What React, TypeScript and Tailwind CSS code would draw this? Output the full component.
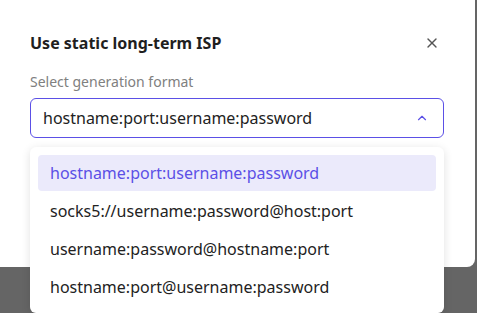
import { X, ChevronUp } from 'lucide-react'

const options = [
  'hostname:port:username:password',
  'socks5://username:password@host:port',
  'username:password@hostname:port',
  'hostname:port@username:password',
]

export default function App() {
  const selected = options[0]
  return (
    <div className="relative h-[313px] w-[477px] overflow-hidden bg-[#656565] font-['Noto_Sans',sans-serif]">
      <div className="-mt-[8px] -ml-[8px] h-[275px] w-[483px] rounded-lg bg-white pl-[38px] pr-[31px] pt-[39px]">
        <div className="flex items-center justify-between">
          <h2 className="text-[16px] font-bold text-[#1f1f1f]">Use static long-term ISP</h2>
          <X className="mr-[4px] h-[16px] w-[16px] text-[#555]" strokeWidth={2} />
        </div>
        <p className="mt-[16px] text-[14px] text-[#808080]">Select generation format</p>
        <div className="mt-[6px] flex h-[40px] items-center justify-between rounded-md border border-[#5b50e6] pl-[12px] pr-[14px]">
          <span className="text-[16px] text-[#222]">{selected}</span>
          <ChevronUp className="h-[14px] w-[14px] text-[#5b50e6]" strokeWidth={2} />
        </div>
      </div>

      <div className="absolute left-[30px] top-[147px] w-[414px] rounded-md bg-white p-[8px] shadow-[0_2px_10px_rgba(0,0,0,0.12)]">
        <ul className="flex flex-col gap-[2px]">
          {options.map((o) => (
            <li
              key={o}
              className={
                o === selected
                  ? 'flex h-[36px] items-center rounded bg-[#ebeafb] px-[12px] text-[16px] text-[#5b50e6]'
                  : 'flex h-[36px] items-center rounded px-[12px] text-[16px] text-[#222]'
              }
            >
              {o}
            </li>
          ))}
        </ul>
      </div>
    </div>
  )
}
